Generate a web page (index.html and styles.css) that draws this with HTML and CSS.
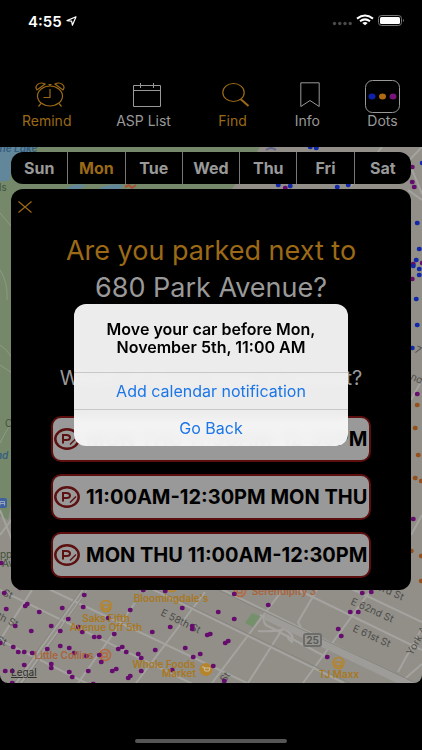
FILE: index.html
```
<!DOCTYPE html>
<html lang="en">
<head>
  <meta charset="UTF-8" />
  <meta name="viewport" content="width=device-width, initial-scale=1.0"/>
  <title>Street Parking</title>
  <link rel="stylesheet" href="styles.css">
</head>
<body>
<header class="status-bar">
  <span class="time">4:55
    <svg width="11" height="10" viewBox="0 0 11 10"><path d="M1 4.6 L10 .8 L6.4 9.2 L5.6 5.2 Z" fill="none" stroke="#fff" stroke-width="1.2" stroke-linejoin="round"/></svg>
  </span>
  <svg width="73" height="14" viewBox="0 0 73 14">
    <g fill="#4a4a4a"><circle cx="2.5" cy="9.5" r="1.7"/><circle cx="7.8" cy="9.5" r="1.7"/><circle cx="13" cy="9.5" r="1.7"/><circle cx="18.2" cy="9.5" r="1.7"/></g>
    <g fill="none" stroke="#fff" stroke-width="2"><path d="M25 4.6 Q33 -1.6 41 4.6"/><path d="M28 7.3 Q33 3.4 38 7.3"/></g>
    <path d="M30.3 8.9 Q33 7 35.7 8.9 L33 11.3 Z" fill="#fff"/>
    <rect x="46.5" y="1.5" width="23" height="10" rx="3" fill="none" stroke="#777"/>
    <rect x="48" y="3" width="20" height="7" rx="1.5" fill="#fff"/>
    <path d="M71 5 Q73 6.5 71 8 Z" fill="#777"/>
  </svg>
</header>

<nav class="toolbar">
  <button class="tool active">
    <svg class="tool-icon" width="30" height="26" viewBox="0 0 30 26" fill="none" stroke="currentColor" stroke-width="1.200">
      <ellipse cx="15" cy="14" rx="12.500" ry="10"/><path d="M15 7 V15.500 H8.500 M6 21.500 L3.500 24.500 M24 21.500 L26.500 24.500 M15 4 V2.500 M13.500 2.500 H16.500"/>
      <path d="M2 8 C-1 4 4 -1 10 2 Z M28 8 C31 4 26 -1 20 2 Z"/>
    </svg>
    Remind
  </button>
  <button class="tool">
    <svg class="tool-icon" width="28" height="26" viewBox="0 0 28 26" fill="none" stroke="currentColor">
      <path d="M.5 3.500 H27.500 V24.500 H.5 Z M.5 8.500 H27.500 M7.500 1 V6 M20.500 1 V6"/>
    </svg>
    ASP List
  </button>
  <button class="tool active">
    <svg class="tool-icon" width="28" height="26" viewBox="0 0 28 26" fill="none" stroke="currentColor">
      <ellipse cx="11.500" cy="10.500" rx="10.700" ry="9" stroke-width="1.200"/><path d="M18.500 17 L26.500 24" stroke-width="2"/>
    </svg>
    Find
  </button>
  <button class="tool">
    <svg class="tool-icon" width="20" height="26" viewBox="0 0 20 26" fill="none" stroke="currentColor">
      <path d="M.8 .8 H19.200 V24.500 L10 18.500 L.8 24.500 Z"/>
    </svg>
    Info
  </button>
  <button class="tool dots">
    <svg width="35" height="33" viewBox="0 0 35 33">
      <rect x=".5" y=".5" width="34" height="32" rx="7" fill="none" stroke="#999"/>
      <ellipse cx="7" cy="16.500" rx="3.500" ry="3" fill="#0c22ab"/><ellipse cx="17.500" cy="16.500" rx="3.500" ry="3" fill="#b06a10"/><ellipse cx="28" cy="16.500" rx="3.500" ry="3" fill="#761578"/>
    </svg>
    Dots
  </button>
</nav>

<main class="map">
  <svg class="map-canvas" viewBox="0 147 422 536" preserveAspectRatio="xMidYMin slice">
    <rect y="147" width="422" height="536" fill="#918f88"/>
    <!-- park and lake -->
    <path d="M0 147 H260 L232 189 L12 500 L8 520 L0 516 Z" fill="#75896a"/>
    <path d="M0 147 H35 Q28 155 12 158 L10 180 Q4 182 0 181 Z M66 189 Q72 183 86 185 L80 189 Z M98 189 Q108 183 124 185 L120 189 Z" fill="#62869a"/>
    <path d="M0 213 L11 226 M0 270 Q8 282 7 300 M0 365 L12 373 M0 345 Q7 349 12 358 M0 443 Q6 430 12 423" fill="none" stroke="#8d9a84"/>
    <path d="M125 187 l4 -2 3 3 4 -3" stroke="#a95138" stroke-width="2" fill="none"/>
    <path d="M266 150 q5 -4 10 0" stroke="#66678b" stroke-width="2" fill="none"/>
    <!-- streets -->
    <g fill="none" stroke="#a5a39f" stroke-width="2">
      <path d="M36 583 L422 766 M140 583 L344 683 M215 586 L422 688 M290 586 L422 650 M350 588 L422 622 M0 590 L205 690 M0 640 L100 690"/>
      <path d="M32 590 L0 640 M86 585 L16 683 M91 585 L21 683 M135 603 L78 683 M205 592 L136 683 M284 588 L212 683 M371 590 L303 683 M422 628 L398 672 M422 664 L400 683 M285 625 L248 683"/>
      <path d="M318 588 L298 622 L302 630 M258 631 Q275 632 284 629 Q295 634 292 642 Q287 639 288 635"/>
      <path d="M260 615 L422 694 M264 615 Q262 625 270 627 L328 658" />
      <path d="M390 180 L422 147 M350 187 L382 147 M408 160 L422 194 M408 190 L422 200 M411 400 L422 380 M411 535 L422 515 M0 510 L12 540 M0 535 L12 519"/>
    </g>
    <path d="M265 616 L422 691" stroke="#9e9c99" stroke-width="7"/>
    <g fill="none" stroke="#87857f">
      <path d="M86 583 L14 683 M93 583 L23 683 M141 582 L422 718 M214 588 L422 686"/>
    </g>
    <path d="M252 613 L260 616 L253 627 L245 623 Z" fill="#74916c"/>

    <!-- street names -->
    <g class="street">
      <text x="160" y="615" transform="rotate(26 160 615)">E 58th St</text>
      <text x="350" y="604" transform="rotate(24 350 604)">E 62nd St</text>
      <text x="352" y="631" transform="rotate(24 352 631)">E 61st St</text>
      <text x="376" y="589" transform="rotate(24 376 589)">3rd St</text>
      <text x="-9" y="616" transform="rotate(25 -9 616)">5th St</text>
      <text x="2" y="595" transform="rotate(25 2 595)">St</text>
      <text x="-4" y="642" transform="rotate(25 -4 642)">St</text>
      <text x="412" y="656" transform="rotate(-60 412 656)">York Av</text>
      <text x="414" y="352" transform="rotate(25 414 352)">7</text>
      <text x="410" y="379" transform="rotate(25 410 379)">nd</text>
      <text x="225" y="683" transform="rotate(-55 225 683)">St</text>
    </g>
    <text x="-7" y="152" class="lake">The Lake</text>
    <text x="-4" y="459" class="lake">nd</text>
    <rect x="-3" y="498" width="10" height="10" rx="2" fill="#3f619e"/>
    <path d="M0 505.500 V501.500 H4.500 V505.500 M0 503.500 H4.500" fill="none" stroke="#9aa7bd"/>
    <text x="-1" y="191" class="park">ls</text>
    <text x="5" y="427" class="park">C</text>
    <text x="-6" y="558" class="park">opp</text>
    <text x="2" y="567" class="park">Av</text>

    <!-- shops -->
    <g fill="none" stroke="#b5842b" stroke-width="1.600">
      <circle cx="106" cy="606" r="5.500"/><path d="M103 605 H109 V609 H103 Z"/>
      <circle cx="338.500" cy="663" r="5.500"/><path d="M335.500 662 H341.500 V666 H335.500 Z"/>
      <circle cx="172" cy="586" r="5.500"/>
      <g stroke="#b36a43"><circle cx="240" cy="591" r="5.500"/><path d="M237 589 H242 V593 H237 Z"/><circle cx="105" cy="655" r="5.500"/><path d="M102 653 H107 V657 H102 Z"/></g>
    </g>
    <circle cx="206" cy="669.500" r="6.500" fill="#b5842b"/><path d="M202 667 H204 L205 671 H209 L210 668 H204" fill="none" stroke="#c9c1ad"/>
    <rect x="304" y="634" width="17" height="12" rx="2" fill="#96958f" stroke="#6d6d6b" stroke-width="2"/>
    <text x="312.500" y="643.500" class="route">25</text>

    <!-- parking signs -->
    <g fill="none" stroke-width="4.500" stroke-linecap="round">
      <path stroke="#660c6e" d="M4 593h.5M6 609h.5M25 606h.5M27 604h.5M39 612h.5M62 608h.5M84 595h.5M83 607h.5M68 619h.5M51 626h.5M15 626h.5M31 631h.5M60 631h.5M78 627h.5M82 632h.5M94 637h.5M99 637h.5M114 634h.5M108 618h.5M130 610h.5M165 591h.5M143 590h.5M182 608h.5M170 627h.5M152 632h.5M192 626h.5M192 629h.5M207 635h.5M210 634h.5M13 647h.5M18 652h.5M24 652h.5M32 653h.5M47 649h.5M60 646h.5M69 648h.5M74 653h.5M86 656h.5M99 655h.5M101 662h.5M118 649h.5M122 647h.5M126 652h.5M138 654h.5M141 658h.5M155 650h.5M185 648h.5M193 657h.5M200 654h.5M24 665h.5M51 664h.5M51 668h.5M69 672h.5M72 677h.5M88 671h.5M112 671h.5M116 669h.5M141 671h.5M128 678h.5M130 676h.5M172 670h.5M5 671h.5M12 671h.5M0 643h.5M12 683h.5M20 588h.5M93 684h.5M234 594h.5M268 605h.5M218 612h.5M234 619h.5M225 643h.5M228 641h.5M213 666h.5M224 681h.5M362 593h.5M371 592h.5M350 612h.5M358 612h.5M338 629h.5M341 636h.5M327 657h.5M412 167h.5M412 182h.5M414 187h.5M285 188h.5M413 264h.5M412 279h.5M422 263h.5M417 394h.5M413 519h.5M1 563h.5"/>
      <path stroke="#1128a8" d="M310 147h.5M316 148h.5M278 185h.5M290 186h.5M337 187h.5M348 185h.5M417 223h.5M419 249h.5M416 260h.5M413 266h.5M419 269h.5M419 275h.5M416 299h.5M417 325h.5M412 348h.5M422 163h.5"/>
      <path stroke="#96501c" d="M417 405h.5M415 428h.5M418 455h.5M415 478h.5M421 481h.5M411 551h.5M421 556h.5M421 581h.5"/>
    </g>

    <g class="shop">
      <text x="171" y="602">Bloomingdale's</text>
      <text x="106" y="622">Saks Fifth</text>
      <text x="106" y="631">Avenue Off 5th</text>
      <text x="164" y="668">Whole Foods</text>
      <text x="179" y="677">Market</text>
      <text x="339" y="678">TJ Maxx</text>
      <text x="284" y="595" class="cafe">Serendipity 3</text>
      <text x="64" y="659" class="cafe">Little Collins</text>
    </g>
  </svg>

  <nav class="days">
    <button>Sun</button>
    <button class="active">Mon</button>
    <button>Tue</button>
    <button>Wed</button>
    <button>Thu</button>
    <button>Fri</button>
    <button>Sat</button>
  </nav>

  <section class="card">
    <button class="close" aria-label="Close">
      <svg width="14" height="12" viewBox="0 0 14 12"><path d="M.5 .5 L13.500 11.500 M13.500 .5 L.5 11.500" stroke="currentColor" stroke-width="1.200"/></svg>
    </button>
    <h1><span class="active">Are you parked next to</span><br>680 Park Avenue?</h1>
    <p class="question">Which of these signs is closest?</p>
    <div class="signs">
      <button class="sign">
        <svg width="26" height="22" viewBox="0 0 26 22"><use href="#no-parking"/></svg>
        MON THU 11:00AM-12:30PM
      </button>
      <button class="sign">
        <svg width="26" height="22" viewBox="0 0 26 22">
          <g id="no-parking" fill="none" stroke="#5c1010"><ellipse cx="13" cy="11" rx="11.700" ry="9.700" stroke-width="2.500"/><path d="M9 15.500 V7 H12.500 Q16 7 16 9.500 Q16 12 12.500 12 H9" stroke-width="2"/><path d="M16 16.500 L22 10.500" stroke-width="1.500"/></g>
        </svg>
        11:00AM-12:30PM MON THU
      </button>
      <button class="sign">
        <svg width="26" height="22" viewBox="0 0 26 22"><use href="#no-parking"/></svg>
        MON THU 11:00AM-12:30PM
      </button>
    </div>
  </section>

  <a class="legal" href="#">Legal</a>
</main>

<footer class="home"><div class="home-bar"></div></footer>

<div class="overlay">
  <div class="alert" role="alertdialog" aria-labelledby="alertTitle">
    <h2 id="alertTitle">Move your car before Mon, November 5th, 11:00 AM</h2>
    <button>Add calendar notification</button>
    <button>Go Back</button>
  </div>
</div>
</body>
</html>
```
FILE: styles.css
```
* {
  box-sizing: border-box;
}

body {
  font-family: Inter, "Liberation Sans", sans-serif;
  margin: 0;
  min-height: 100vh;
  display: flex;
  flex-direction: column;
  background-color: #000;
  color: #999;
}

button {
  font: inherit;
  color: inherit;
  background: none;
  border: none;
  padding: 0;
  cursor: pointer;
}

svg {
  display: block;
}

.status-bar {
  display: flex;
  justify-content: space-between;
  align-items: center;
  padding: 12px 17px 0 28px;
  height: 30px;
}

.time {
  display: flex;
  align-items: center;
  gap: 4px;
  color: #fff;
  font-size: 15px;
  font-weight: 600;
}

.toolbar {
  display: flex;
  justify-content: space-between;
  align-items: flex-end;
  padding: 50px 22px 18px;
}

.tool {
  display: flex;
  flex-direction: column;
  align-items: center;
  gap: 5px;
  font-size: 14px;
  line-height: 16px;
}

.tool-icon {
  margin-left: 6px;
}

.dots {
  gap: 0;
}

.active {
  color: #9c6a16;
}

.map {
  position: relative;
  flex: 1;
  display: flex;
  flex-direction: column;
  padding: 5px 11px;
  border-radius: 0 0 8px 8px;
  overflow: hidden;
}

.map-canvas {
  position: absolute;
  inset: 0;
  width: 100%;
  height: 100%;
}

.map-canvas text {
  font-size: 10px;
}

.street {
  fill: #4d4c4a;
}

.shop {
  fill: #a97820;
  font-weight: 600;
  text-anchor: middle;
}

.cafe {
  fill: #a9643c;
}

.lake {
  fill: #345d80;
  font-style: italic;
  font-weight: 600;
}

.park {
  fill: #40523c;
}

.route {
  fill: #5b5b59;
  font-weight: 700;
  text-anchor: middle;
}

.days {
  position: relative;
  display: flex;
  height: 32px;
  background-color: #000;
  border-radius: 12px;
}

.days button {
  flex: 1;
  font-size: 16px;
  font-weight: 700;
}

.days button + button {
  border-left: 1px solid #777;
}

.days button.active {
  color: #9c6a16;
}

.card {
  position: relative;
  margin-top: 5px;
  padding: 12px 40px;
  background-color: #000;
  border-radius: 12px;
}

.close {
  display: block;
  margin-left: -33px;
  color: #9c6a16;
}

h1 {
  margin: 19px 0 0;
  font-size: 27px;
  font-weight: 400;
  line-height: 37px;
  text-align: center;
  white-space: nowrap;
}

.question {
  margin: 60px 0 26px;
  font-size: 20px;
  line-height: 24px;
  text-align: center;
  white-space: nowrap;
}

.signs {
  display: flex;
  flex-direction: column;
  gap: 12px;
}

.sign {
  display: flex;
  align-items: center;
  gap: 6px;
  height: 46px;
  padding-left: 1px;
  border: 2px solid #5c0d0d;
  border-radius: 10px;
  background-color: #999;
  color: #000;
  font-size: 20px;
  font-weight: 700;
  white-space: nowrap;
  overflow: hidden;
}

.sign svg {
  flex-shrink: 0;
}

.legal {
  position: relative;
  margin-top: auto;
  color: #30302f;
  font-size: 10px;
  line-height: 12px;
}

.home {
  height: 67px;
  padding-top: 56px;
}

.home-bar {
  width: 36%;
  height: 4px;
  margin: 0 auto;
  border-radius: 2px;
  background-color: #555;
}

.overlay {
  position: fixed;
  inset: 0;
  display: flex;
  align-items: center;
  justify-content: center;
}

.alert {
  width: 65%;
  display: flex;
  flex-direction: column;
  border-radius: 12px;
  background-color: rgba(249, 249, 249, 0.95);
  backdrop-filter: blur(5px);
  color: #000;
  overflow: hidden;
}

.alert h2 {
  margin: 0;
  padding: 16px 20px;
  font-size: 16px;
  font-weight: 600;
  line-height: 18px;
  text-align: center;
}

.alert button {
  height: 37px;
  border-top: 1px solid #c8c8c8;
  color: #1b76e8;
  font-size: 16px;
}
```
